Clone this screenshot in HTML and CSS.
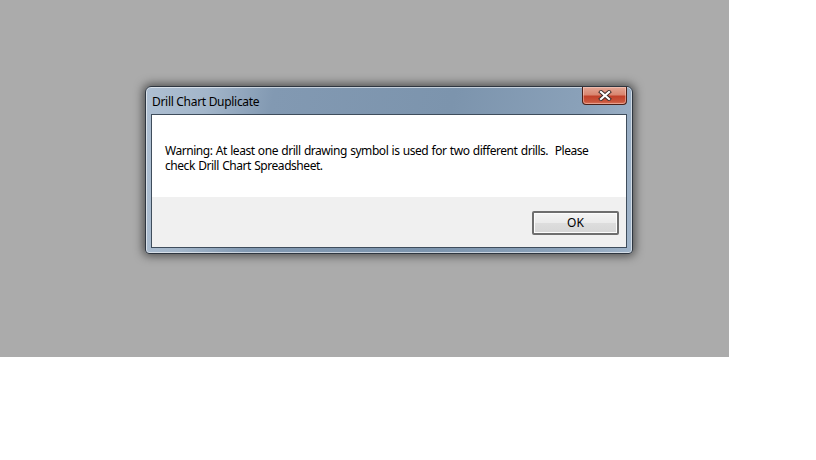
FILE: index.html
```html
<!DOCTYPE html>
<html>
<head>
<meta charset="utf-8">
<link rel="stylesheet" href="styles.css">
</head>
<body>
<div class="desktop">
  <div class="dialog">
    <div class="titlebar">
      <span class="title">Drill Chart Duplicate</span>
      <div class="close">
        <svg width="14" height="11" viewBox="0 0 14 11">
          <path d="M3 2 L11 9 M11 2 L3 9" stroke="#3a2a28" stroke-width="4" stroke-linecap="square"/>
          <path d="M3 2 L11 9 M11 2 L3 9" stroke="#ffffff" stroke-width="2.2" stroke-linecap="square"/>
        </svg>
      </div>
    </div>
    <div class="client">
      <div class="message"><p class="line">Warning: At least one drill drawing symbol is used for two different drills.&nbsp; Please</p><p class="line">check Drill Chart Spreadsheet.</p></div>
      <div class="buttons">
        <button class="ok">OK</button>
      </div>
    </div>
  </div>
</div>
</body>
</html>
```
FILE: styles.css
```css
html, body {
  margin: 0;
  padding: 0;
  background: #ffffff;
  width: 816px;
  height: 460px;
  overflow: hidden;
}
.desktop {
  width: 729px;
  height: 357px;
  background: #ababab;
  padding: 86px 0 0 145px;
  box-sizing: border-box;
}
.dialog {
  width: 488px;
  height: 168px;
  box-sizing: border-box;
  border: 1px solid #2e3640;
  border-radius: 6px 6px 4px 4px;
  background: linear-gradient(100deg, #aebfd2 0%, #a3b6ca 12%, #8299b2 25%, #7c94ad 60%, #8aa1b9 85%, #a0b4c9 100%);
  box-shadow: 0 0 10px 2px rgba(0,0,0,0.55), inset 0 0 0 1px rgba(255,255,255,0.55);
  padding: 0 5px 5px 5px;
  display: flex;
  flex-direction: column;
  font-family: "Noto Sans", "Open Sans", sans-serif;
}
.titlebar {
  height: 27px;
  display: flex;
  align-items: flex-start;
  justify-content: space-between;
}
.title {
  font-size: 12px;
  line-height: 16px;
  color: #000;
  margin-top: 7px;
  margin-left: 1px;
  letter-spacing: -0.3px;
}
.close {
  width: 45px;
  height: 18px;
  box-sizing: border-box;
  border: 1px solid #4a2018;
  border-top: none;
  border-radius: 0 0 4px 4px;
  background: linear-gradient(#e3a695 0%, #d98670 45%, #c1412a 55%, #c9553c 85%, #d9735a 100%);
  box-shadow: inset 0 0 0 1px rgba(255,220,210,0.45);
  display: flex;
  align-items: center;
  justify-content: center;
}
.close svg { display: block; }
.client {
  flex: 1;
  border: 1px solid #3f4d5c;
  background: #f0f0f0;
  display: flex;
  flex-direction: column;
}
.message {
  height: 82px;
  box-sizing: border-box;
  background: #ffffff;
  padding: 28px 0 0 13px;
  font-size: 12px;
  color: #000;
  letter-spacing: -0.45px;
  word-spacing: 0.6px;
  display: flex;
  flex-direction: column;
}
.line {
  margin: 0;
  height: 15px;
  line-height: 15px;
  white-space: nowrap;
}
.buttons {
  flex: 1;
  display: flex;
  justify-content: flex-end;
  align-items: flex-start;
  padding: 14px 7px 0 0;
}
.ok {
  width: 87px;
  height: 24px;
  box-sizing: border-box;
  border: 2px solid #6e6e6e;
  border-radius: 2px;
  background: linear-gradient(#f4f4f4 0%, #ebebeb 48%, #dddddd 52%, #d6d6d6 100%);
  box-shadow: inset 0 0 0 1px #fcfcfc;
  font-family: "Noto Sans", "Open Sans", sans-serif;
  font-size: 12px;
  color: #000;
  padding: 0;
  line-height: 18px;
}
```
